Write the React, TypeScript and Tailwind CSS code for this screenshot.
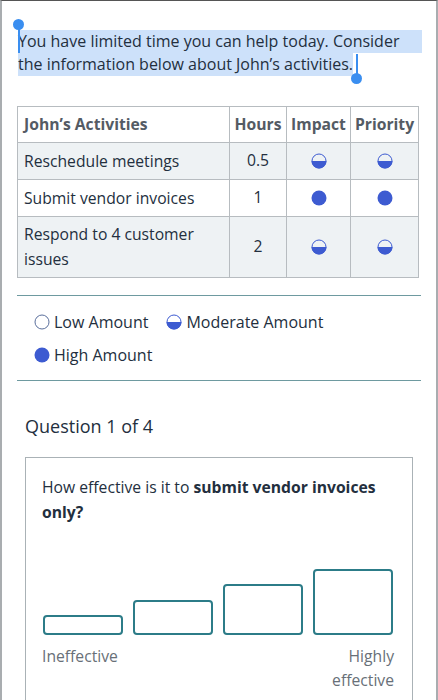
import React from 'react';

type Level = 'low' | 'mid' | 'high';

const Dot: React.FC<{ level: Level; size?: number }> = ({ level, size = 16 }) => (
  <svg width={size} height={size} viewBox="0 0 16 16" className="shrink-0">
    {level === 'high' && <circle cx="8" cy="8" r="7.5" fill="#3d5bd1" />}
    {level === 'mid' && (
      <>
        <path d="M0.5 8 A7.5 7.5 0 0 0 15.5 8 Z" fill="#3d5bd1" />
        <circle cx="8" cy="8" r="7" fill="none" stroke="#3d5bd1" strokeWidth="1" />
      </>
    )}
    {level === 'low' && <circle cx="8" cy="8" r="7" fill="white" stroke="#5a6f9c" strokeWidth="1" />}
  </svg>
);

const App: React.FC = () => {
  const rows: { name: string; hours: string; impact: Level; priority: Level; bg: string }[] = [
    { name: 'Reschedule meetings', hours: '0.5', impact: 'mid', priority: 'mid', bg: 'bg-[#eef2f4]' },
    { name: 'Submit vendor invoices', hours: '1', impact: 'high', priority: 'high', bg: 'bg-white' },
    { name: 'Respond to 4 customer issues', hours: '2', impact: 'mid', priority: 'mid', bg: 'bg-[#eef2f4]' },
  ];

  const bars = ['h-[20px]', 'h-[35px]', 'h-[51px]', 'h-[66px]'];

  return (
    <div className="w-[438px] h-[700px] overflow-hidden bg-white border-t border-t-[#555] border-l-2 border-l-[#a9adb0] border-r-2 border-r-[#a9adb0] text-[#232f3e]" style={{ fontFamily: '"Open Sans", "Noto Sans", sans-serif' }}>
      {/* selected intro text */}
      <div className="relative pl-[16px] pr-[16px] pt-[29px] text-[16px] leading-[23px]">
        <p>
          <span className="block w-[404px] h-[23px] bg-[#cde1fa]">You have limited time you can help today. Consider</span>
          <span className="bg-[#cde1fa] py-[1px]">the information below about John’s activities.</span>
        </p>
        <span className="absolute left-[11px] top-[18px] w-[11px] h-[11px] rounded-full bg-[#3a8ef0]" />
        <span className="absolute left-[16px] top-[27px] w-[2px] h-[25px] bg-[#3a8ef0]" />
        <span className="absolute left-[354px] top-[53px] w-[2px] h-[24px] bg-[#3a8ef0]" />
        <span className="absolute left-[349px] top-[72px] w-[11px] h-[11px] rounded-full bg-[#3a8ef0]" />
      </div>

      {/* activities table */}
      <table className="mt-[30px] ml-[15px] w-[402px] border-collapse text-[15.7px]">
        <thead>
          <tr className="h-[36px]">
            <th className="border border-[#b7bcc0] text-left pl-[6px] font-bold text-[#545b64]">John’s Activities</th>
            <th className="border border-[#b7bcc0] w-[57px] font-bold text-[#545b64]">Hours</th>
            <th className="border border-[#b7bcc0] w-[64px] font-bold text-[#545b64]">Impact</th>
            <th className="border border-[#b7bcc0] w-[68px] font-bold text-[#545b64]">Priority</th>
          </tr>
        </thead>
        <tbody>
          {rows.map((r) => (
            <tr key={r.name} className={`${r.bg} ${r.name.length > 24 ? 'h-[61px]' : 'h-[37px]'}`}>
              <td className="border border-[#b7bcc0] pl-[6px] pr-2 leading-[25px]">{r.name}</td>
              <td className="border border-[#b7bcc0] text-center">{r.hours}</td>
              <td className="border border-[#b7bcc0]">
                <div className="flex justify-center"><Dot level={r.impact} /></div>
              </td>
              <td className="border border-[#b7bcc0]">
                <div className="flex justify-center"><Dot level={r.priority} /></div>
              </td>
            </tr>
          ))}
        </tbody>
      </table>

      {/* legend */}
      <div className="mx-[15px] mt-[17px] border-t-[1.5px] border-b-[1.5px] border-[#6e9aa0] pt-[14px] pb-[13px] text-[16px]">
        <div className="flex items-center gap-[18px] pl-[17px]">
          <div className="flex items-center gap-[4px]"><Dot level="low" /> <span>Low Amount</span></div>
          <div className="flex items-center gap-[4px]"><Dot level="mid" /> <span>Moderate Amount</span></div>
        </div>
        <div className="flex items-center gap-[4px] pl-[17px] mt-[9px]">
          <Dot level="high" /> <span>High Amount</span>
        </div>
      </div>

      <div className="pl-[23px] mt-[32px] text-[18px]">Question 1 of 4</div>

      {/* question card */}
      <div className="ml-[23px] mr-[23px] mt-[17px] border border-[#aab2b6] px-[16px] pt-[17px] h-[260px]">
        <p className="text-[15.7px] leading-[25px]">
          How effective is it to <b>submit vendor invoices only?</b>
        </p>
        <div className="mt-[44px] flex items-end gap-[10px] pl-[1px] pr-[2px]">
          {bars.map((h) => (
            <div key={h} className={`${h} w-[80px] rounded-[4px] border-2 border-[#2c7c88] bg-white`} />
          ))}
        </div>
        <div className="mt-[9px] flex justify-between text-[15.7px] leading-[24px] text-[#687078] pr-[2px]">
          <span>Ineffective</span>
          <span className="text-right">Highly<br />effective</span>
        </div>
      </div>
    </div>
  );
};

export default App;
